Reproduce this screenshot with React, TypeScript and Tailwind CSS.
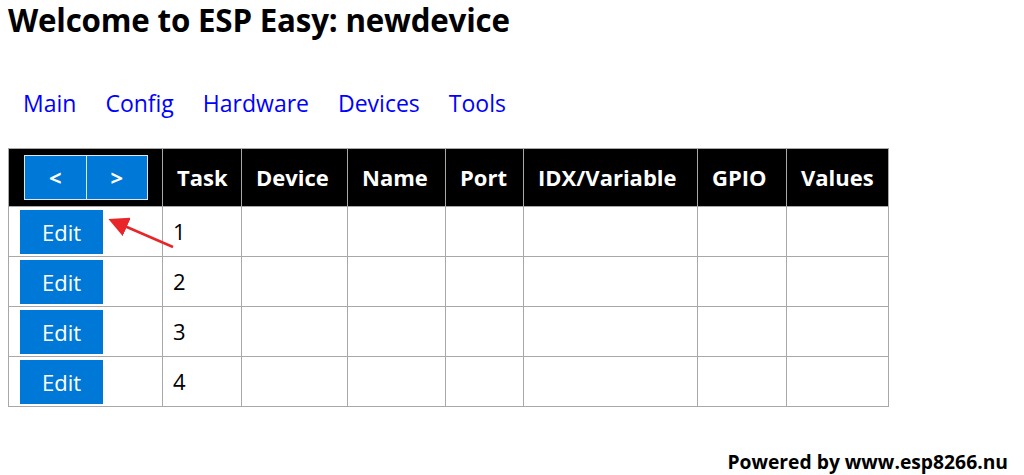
import React from "react";

const cols = [
  { label: "", w: "w-[154px]" },
  { label: "Task", w: "w-[79px]" },
  { label: "Device", w: "w-[106px]" },
  { label: "Name", w: "w-[98px]" },
  { label: "Port", w: "w-[78px]" },
  { label: "IDX/Variable", w: "w-[174px]" },
  { label: "GPIO", w: "w-[89px]" },
  { label: "Values", w: "w-[102px]" },
];

export default function App() {
  return (
    <div
      className="relative w-[1024px] h-[475px] overflow-hidden bg-white text-black px-2"
      style={{ fontFamily: '"Open Sans", "Noto Sans", sans-serif' }}
    >
      <h1 className="text-[31.3px] font-bold leading-[40px] pt-0 tracking-[-0.2px]">
        Welcome to ESP Easy: newdevice
      </h1>
      <nav className="mt-[48px] flex gap-[29px] pl-[15px] text-[23px] leading-[30px] text-[#0000ff]">
        <a>Main</a>
        <a>Config</a>
        <a>Hardware</a>
        <a>Devices</a>
        <a>Tools</a>
      </nav>
      <table className="mt-[30px] border-collapse table-fixed w-[880px] border border-[#a8a8a8]">
        <thead>
          <tr className="bg-black h-[58px]">
            {cols.map((c, i) => (
              <th
                key={i}
                className={`${c.w} border border-[#a8a8a8] text-left align-middle text-white font-bold text-[22px] px-[14px] p-0`}
              >
                {i === 0 ? (
                  <div className="flex w-[124px] h-[45px] ml-[1px]">
                    <span className="flex-1 flex items-center justify-center bg-[#0078d7] border border-[#d8e8f8] text-white text-[22px]">
                      &lt;
                    </span>
                    <span className="flex-1 flex items-center justify-center bg-[#0078d7] border border-[#d8e8f8] border-l-0 text-white text-[22px]">
                      &gt;
                    </span>
                  </div>
                ) : (
                  c.label
                )}
              </th>
            ))}
          </tr>
        </thead>
        <tbody>
          {[1, 2, 3, 4].map((n) => (
            <tr key={n} className="h-[50px]">
              <td className="border border-[#a8a8a8] p-0 pl-[11px] align-top pt-[3px]">
                <div className="w-[83px] h-[44px] bg-[#0078d7] text-white text-[22px] flex items-center justify-center">
                  Edit
                </div>
              </td>
              <td className="border border-[#a8a8a8] px-[10px] text-[22px] align-middle">{n}</td>
              <td className="border border-[#a8a8a8]"></td>
              <td className="border border-[#a8a8a8]"></td>
              <td className="border border-[#a8a8a8]"></td>
              <td className="border border-[#a8a8a8]"></td>
              <td className="border border-[#a8a8a8]"></td>
              <td className="border border-[#a8a8a8]"></td>
            </tr>
          ))}
        </tbody>
      </table>
      <footer className="mt-[44px] text-right pr-[8px] text-[19.3px] font-bold leading-[22px]">
        Powered by www.esp8266.nu
      </footer>
      <svg className="absolute left-0 top-0 pointer-events-none" width="1024" height="475">
        <defs>
          <marker id="ah" markerWidth="8" markerHeight="8" refX="6" refY="4" orient="auto" markerUnits="strokeWidth">
            <path d="M0,0 L8,4 L0,8 z" fill="#e8262a" />
          </marker>
        </defs>
        <line x1="173" y1="247" x2="113" y2="221" stroke="#e8262a" strokeWidth="2.5" markerEnd="url(#ah)" />
      </svg>
    </div>
  );
}
